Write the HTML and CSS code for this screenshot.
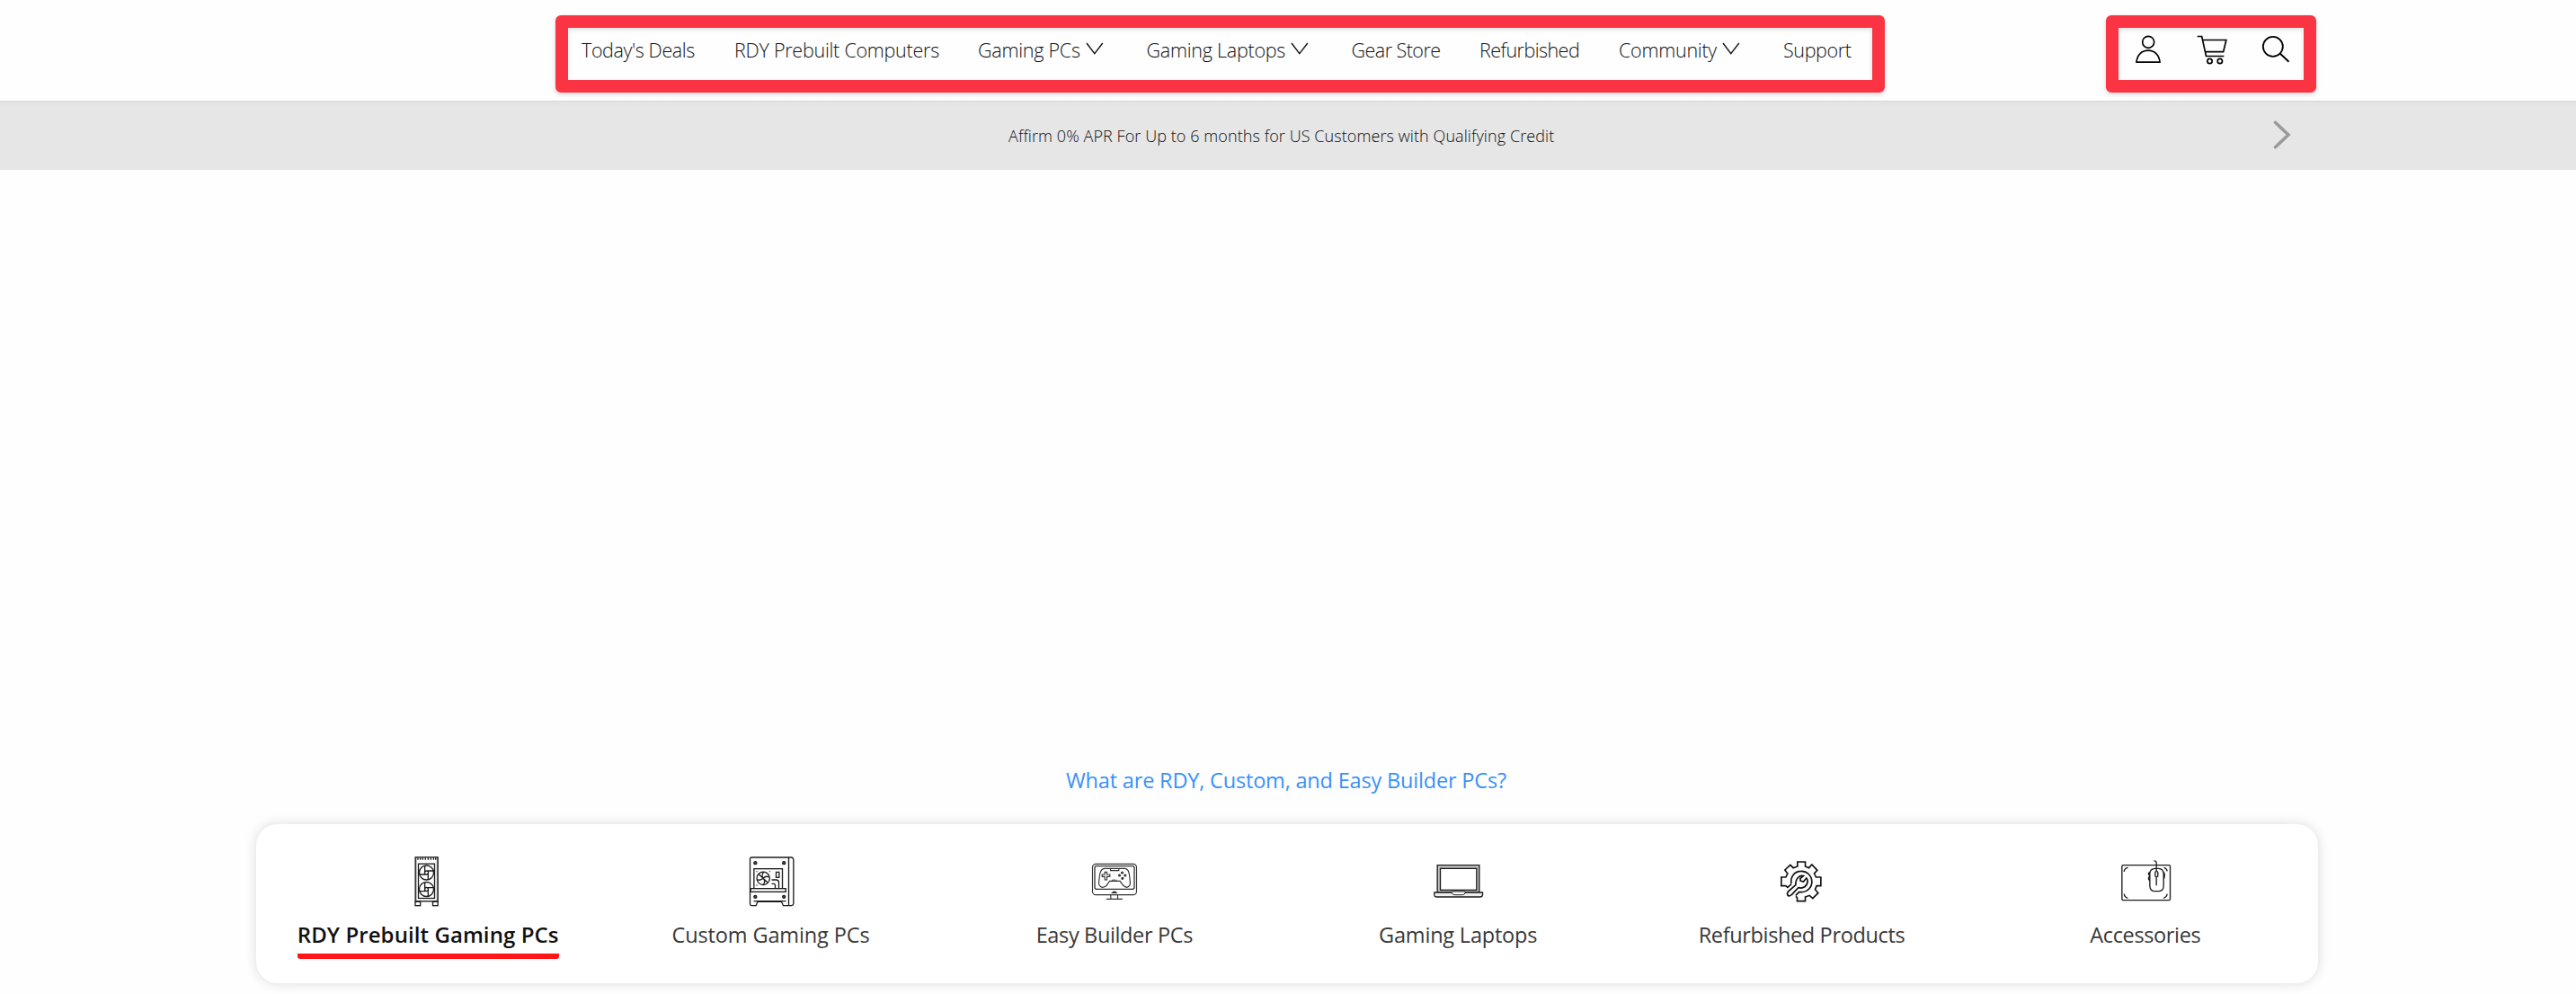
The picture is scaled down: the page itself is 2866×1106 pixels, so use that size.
FILE: index.html
```html
<!DOCTYPE html>
<html lang="en">
<head>
<meta charset="utf-8">
<title>Gaming PCs</title>
<link rel="stylesheet" href="styles.css">
</head>
<body>
<header class="header">
  <nav class="frame main-nav">
    <a class="nav-item ls-m">Today's Deals</a>
    <a class="nav-item ls-s">RDY Prebuilt Computers</a>
    <a class="nav-item ls-s">Gaming PCs<svg class="caret" viewBox="0 0 20 14"><path d="M1 1 9.8 12.6 18.8 1"/></svg></a>
    <a class="nav-item ls-s">Gaming Laptops<svg class="caret" viewBox="0 0 20 14"><path d="M1 1 9.8 12.6 18.8 1"/></svg></a>
    <a class="nav-item ls-l">Gear Store</a>
    <a class="nav-item ls-l">Refurbished</a>
    <a class="nav-item ls-s">Community<svg class="caret" viewBox="0 0 20 14"><path d="M1 1 9.8 12.6 18.8 1"/></svg></a>
    <a class="nav-item ls-m">Support</a>
  </nav>
  <div class="frame tools">
    <svg class="tool" viewBox="150 105 120 120"><circle cx="210.500" cy="140.500" r="19.500"/><path d="M171 207.500C173 183 189 168.500 210 168.500S247 183 249 207.500Z"/></svg>
    <svg class="tool" viewBox="363 105 120 120"><path d="M374 121.500H389L403.500 187.500H463M392 133.500H470.500L461 173H401"/><circle cx="415.500" cy="204" r="8"/><circle cx="449.500" cy="204" r="8"/></svg>
    <svg class="tool" viewBox="575 105 120 120"><circle cx="625.500" cy="155.500" r="33" stroke-width="5.500"/><path d="M649 178.500 678.500 206" stroke-width="6"/></svg>
  </div>
</header>

<section class="banner">
  <p class="banner-text">Affirm 0% APR For Up to 6 months for US Customers with Qualifying Credit</p>
  <svg class="next" viewBox="0 0 20 32"><path d="M2.500 2.300 17 16 2.500 29.700"/></svg>
</section>

<main class="content">
  <a class="explain">What are RDY, Custom, and Easy Builder PCs?</a>
  <div class="tabs">
    <a class="tab active">
      <svg class="tab-icon" viewBox="558 150 180 180">
        <rect x="606.500" y="161.500" width="75" height="147" fill="#aaa"/><rect x="611" y="164" width="66" height="142" fill="#fff" stroke="none"/>
        <path d="M615 163v7M623 163v7M631 163v7M640 163v7M649 163v7M658 163v7M667 163v7M674 163v7" stroke-width="4"/>
        <rect x="616.500" y="183.500" width="54" height="115" fill="#fff" stroke-width="4"/>
        <g fill="none"><circle cx="643.500" cy="213" r="24"/><circle cx="643.500" cy="213" r="6"/><path d="M638 210V190M647 207h20M649 216v20M640 219h-20"/>
        <circle cx="643.500" cy="268.500" r="24"/><circle cx="643.500" cy="268.500" r="6"/><path d="M638 266v-20M647 263h20M649 272v20M640 275h-20"/></g>
        <rect x="606" y="310" width="17" height="13" fill="#fff"/><rect x="664.500" y="310" width="17" height="13" fill="#fff"/>
      </svg>
      <span class="label">RDY Prebuilt Gaming PCs</span>
    </a>
    <a class="tab">
      <svg class="tab-icon" viewBox="325.500 90 180 180">
        <path d="M350 102H484Q490 104 490 110V256Q489 262 483 263H456L450 250H370L365 263H350Q345 262 345 257V107Q345 102 350 102ZM474 103V262M357 248H465" />
        <circle cx="362.500" cy="120.500" r="4.500" fill="#555"/><circle cx="458" cy="120.500" r="4.500" fill="#555"/><circle cx="362.500" cy="233.500" r="4.500" fill="#555"/><circle cx="458" cy="233.500" r="4.500" fill="#555"/>
        <rect x="358" y="140" width="95" height="66"/><circle cx="389" cy="172" r="21.500"/>
        <path d="M389 172C383 164 387 155 391 151M389 172C397 162 405 166 409 168M389 172C397 180 393 188 390 193M389 172C380 180 373 178 369 176M389 172 374 158M389 172 404 187M366 149h3M409 149h3M366 195h3"/>
        <path d="M432 151h10v18h-10ZM417 177H434Q441 179 441 186V205M417 190H425Q429 191 429 195V205"/>
        <rect x="347" y="206" width="117" height="11" fill="#fff"/>
      </svg>
      <span class="label w2">Custom Gaming PCs</span>
    </a>
    <a class="tab">
      <svg class="tab-icon soft" viewBox="272.500 90 180 180">
        <rect x="286" y="124" width="147" height="103" rx="11"/><rect x="293.500" y="131" width="132" height="77" rx="6" stroke-width="4"/>
        <path d="M325 139H395Q407 141 409 160L412 187Q412 200 400 202Q389 200 384 190L378 181H343L337 190Q331 202 318 202Q307 199 307 187L310 160Q313 141 325 139ZM346 140V146H374V140"/>
        <path d="M327 151h7v8h10v7h-10v11h-7v-11h-9v-7h9ZM352 182v-6M358 182v-7M365 182v-6"/>
        <g fill="#333"><circle cx="385" cy="153" r="3"/><circle cx="376" cy="162" r="3"/><circle cx="395" cy="162" r="3"/><circle cx="386" cy="172" r="3"/></g>
        <path d="M347 228V240M370 228V240M332 241H386M352 220Q359 213 366 220Z"/>
      </svg>
      <span class="label w3">Easy Builder PCs</span>
    </a>
    <a class="tab">
      <svg class="tab-icon" viewBox="279.500 90 180 180">
        <path d="M298 128H438V219H298Z" fill="#c4c4c4"/><rect x="308" y="139" width="121" height="72" fill="#fff"/>
        <path d="M288 219H449V228Q448 233 442 234H294Q288 233 288 228Z" fill="#eee"/><path d="M346 216H391V222Q387 227 380 227H357Q348 226 346 221Z" fill="#fff" stroke-width="3"/>
      </svg>
      <span class="label w4">Gaming Laptops</span>
    </a>
    <a class="tab">
      <svg class="tab-icon bold" viewBox="316.500 90 180 180">
        <path d="M371 191 358 202 352 197H337V168H352L358 156 349 144 367 127 377 137 391 132V117H417V132L429 137 439 126 457 145 447 156 453 168H469V197H455L450 209 460 221 442 239 431 229 417 234V248H390V236L385 232"/>
        <path d="M370 189C367 165 382 148 403 148A35 35 0 0 1 405 218H396L385 229"/>
        <path d="M385 194 359 217Q355 225 360 230Q367 232 372 226L394 203C411 208 425 196 425 181Q424 174 421 171L411 183 401 180 400 173 411 164C398 160 384 173 385 194Z"/>
      </svg>
      <span class="label w5">Refurbished Products</span>
    </a>
    <a class="tab">
      <svg class="tab-icon" viewBox="173.500 150 180 180">
        <rect x="182" y="188" width="161" height="117" rx="4"/>
        <path d="M189 210Q190 198 202 196M322 196Q332 199 333 208M189 284Q191 296 202 298M333 284Q331 296 320 298" stroke-width="4"/>
        <path d="M289 173Q298 174 297 184V208M293 199Q275 200 275 216V257Q276 275 292 275H305Q321 273 321 257V216Q320 200 304 199ZM274 212Q267 217 274 222M274 226Q267 233 274 239M321 210Q328 222 321 235M297 225V256"/>
        <rect x="293" y="209" width="9" height="18" rx="4"/>
      </svg>
      <span class="label w6">Accessories</span>
    </a>
  </div>
</main>
</body>
</html>
```
FILE: styles.css
```css
* { box-sizing: border-box; }

body {
  margin: 0;
  height: 1106px;
  overflow: hidden;
  background: #fefefe;
  color: #383838;
  font-family: "Open Sans", "Noto Sans", sans-serif;
}

svg {
  fill: none;
  stroke: #1c1c1c;
  stroke-width: 4;
  flex: none;
}

.header {
  display: flex;
  align-items: flex-start;
  height: 112px;
  padding: 17px 0 0 618px;
}

.frame {
  height: 86px;
  border: 14px solid #fa3442;
  border-radius: 6px;
  box-shadow: 0 2px 5px rgba(0, 0, 0, .16), inset 0 2px 5px rgba(0, 0, 0, .12);
}

.main-nav {
  display: grid;
  grid-template-columns: 170px 271px 187.5px 228px 142.5px 155px 183px auto;
  width: 1479px;
  padding: 9px 0 0 15px;
}

.nav-item {
  display: flex;
  height: 32px;
  color: #111;
  font-size: 21.5px;
  font-weight: 300;
  line-height: 32px;
  white-space: nowrap;
}

.ls-s { letter-spacing: -.25px; }
.ls-m { letter-spacing: -.38px; }
.ls-l { letter-spacing: -.54px; }

.caret {
  width: 20px;
  height: 14px;
  margin: 7px 0 0 6px;
  stroke: #111;
  stroke-width: 1.4;
}

.tools {
  display: flex;
  gap: 31px;
  width: 234px;
  margin-left: 246px;
  padding: 4px 0 0 13px;
}

.tool {
  width: 40px;
  height: 40px;
  stroke: #000;
  stroke-width: 5;
}

.banner {
  display: flex;
  height: 77px;
  padding-left: 1122px;
  background: linear-gradient(#d6d6d6, #e3e3e3 2px, #e6e6e6 8px);
}

.banner-text {
  width: 1407px;
  margin: 26px 0 0;
  color: #111;
  font-size: 18px;
  font-weight: 300;
  line-height: 26px;
  letter-spacing: .08px;
  white-space: nowrap;
}

.next {
  width: 20px;
  height: 32px;
  margin-top: 22px;
  stroke: #999;
  stroke-width: 3.5;
  stroke-linecap: round;
}

.content {
  display: flex;
  flex-direction: column;
  align-items: center;
  padding-top: 662px;
}

.explain {
  height: 66px;
  margin-right: 4px;
  color: #3a91f8;
  font-size: 23.5px;
  line-height: 34px;
  letter-spacing: -.18px;
  white-space: nowrap;
}

.tabs {
  display: grid;
  grid-template-columns: repeat(6, 1fr);
  width: 2294px;
  height: 177px;
  margin-right: 2px;
  border-radius: 24px;
  background: #fff;
  box-shadow: 0 0 14px rgba(0, 0, 0, .14);
}

.tab {
  display: flex;
  flex-direction: column;
  align-items: center;
  padding-top: 33px;
}

.tab-icon {
  width: 60px;
  height: 60px;
}

.soft { stroke: #333; stroke-width: 3.4; }
.bold { stroke: #111; stroke-width: 5; }

.label {
  height: 57px;
  margin: 13px 2px 0 0;
  font-size: 23.5px;
  line-height: 34px;
  white-space: nowrap;
}

.w2 { letter-spacing: -.12px; }
.w3 { letter-spacing: -.36px; }
.w4 { letter-spacing: -.2px; }
.w5 { letter-spacing: -.36px; }
.w6 { letter-spacing: -.36px; }

.active .label {
  height: 44px;
  margin-right: 0;
  border-bottom: 6px solid #ff1616;
  border-radius: 3px;
  color: #111;
  font-size: 24px;
  font-weight: 600;
  letter-spacing: .08px;
}
```
